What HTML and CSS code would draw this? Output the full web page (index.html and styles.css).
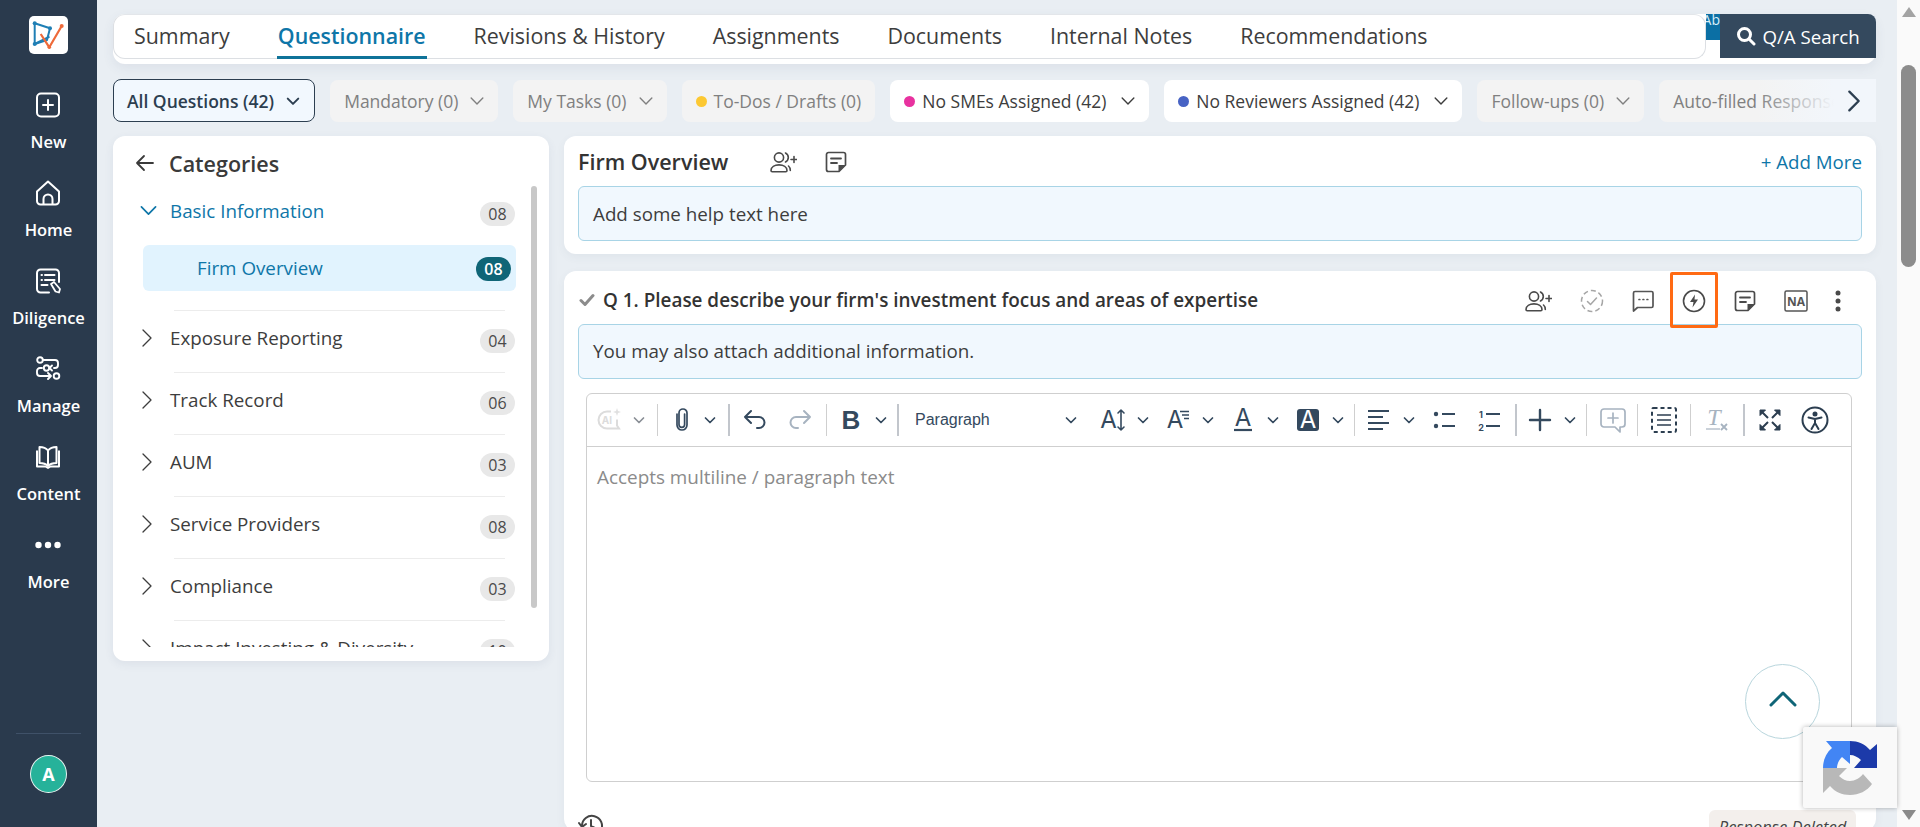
FILE: index.html
```html
<!DOCTYPE html>
<html lang="en">
  <head>
    <meta charset="UTF-8" />
    <meta name="viewport" content="width=device-width, initial-scale=1.0" />
    <title>Questionnaire</title>
    <link rel="stylesheet" href="styles.css">
  </head>
  <body>
    <svg class="defs" width="0" height="0">
      <symbol id="chev" viewBox="0 0 12 12"><path d="M1.5 4l4.5 4.5L10.5 4" fill="none" stroke="currentColor" stroke-width="1.7" stroke-linecap="round" stroke-linejoin="round"/></symbol>
      <symbol id="chev-thin" viewBox="0 0 12 12"><path d="M1 3.5l5 5 5-5" fill="none" stroke="currentColor" stroke-width="1.2" stroke-linecap="round" stroke-linejoin="round"/></symbol>
      <symbol id="chev-right" viewBox="0 0 12 20"><path d="M2 2l8 8-8 8" fill="none" stroke="currentColor" stroke-width="1.3" stroke-linecap="round" stroke-linejoin="round"/></symbol>
      <symbol id="person-add" viewBox="0 0 28 24"><g fill="none" stroke="currentColor" stroke-width="1.6" stroke-linecap="round"><circle cx="10" cy="7.5" r="4.6"/><path d="M2 20.5c0-3.6 3.6-5.6 8-5.6s8 2 8 5.600c0 .8-.4 1.200-1.200 1.200H3.200C2.400 21.700 2 21.300 2 20.500z"/><path d="M16.500 3c1.800 1 2.800 2.600 2.800 4.500s-1 3.500-2.800 4.500M19.500 16c1.200 1 1.800 2.500 1.800 4.500"/><path d="M25 6.500v6M22 9.500h6"/></g></symbol>
      <symbol id="note" viewBox="0 0 24 24"><path d="M4.500 2.500h15a2 2 0 0 1 2 2v10.500l-6.500 6.500H4.500a2 2 0 0 1-2-2v-15a2 2 0 0 1 2-2z" fill="none" stroke="currentColor" stroke-width="1.700"/><path d="M14.500 21.500v-6.500h7z" fill="currentColor"/><path d="M7 8.500h10M7 13h6" stroke="currentColor" stroke-width="1.800" stroke-linecap="round"/></symbol>
    </svg>

    <aside class="sidebar">
      <div class="logo">
        <svg width="39" height="38" viewBox="0 0 39 38" fill="none">
          <path d="M5.700 7.300L21 12.300 18 24 5.700 28z" stroke="#1f7fb5" stroke-width="2" stroke-linejoin="round"/>
          <path d="M5.700 28L20.500 20.700" stroke="#1f7fb5" stroke-width="2"/>
          <path d="M11.700 18l8.600 13.300L32.700 10" stroke="#ee6a3a" stroke-width="2.200" stroke-linejoin="round"/>
          <circle cx="5.700" cy="7.300" r="2" fill="#1f7fb5"/>
          <circle cx="21" cy="12.300" r="2" fill="#1f7fb5"/>
          <circle cx="5.700" cy="28" r="2" fill="#1f7fb5"/>
          <circle cx="32.700" cy="10" r="2" fill="#ee6a3a"/>
          <circle cx="20.300" cy="31.300" r="1.800" fill="#ee6a3a"/>
        </svg>
      </div>
      <nav class="nav">
        <a class="nav-item">
          <svg width="26" height="26" viewBox="0 0 26 26" fill="none" stroke="#fff" stroke-width="2"><rect x="2" y="1.500" width="22" height="23" rx="4"/><path d="M13 8v10M8 13h10" stroke-linecap="round"/></svg>
          <span>New</span>
        </a>
        <a class="nav-item">
          <svg width="26" height="26" viewBox="0 0 26 26" fill="none" stroke="#fff" stroke-width="2" stroke-linejoin="round"><path d="M2 11.500L13 1.500l11 10v9.500a3.500 3.500 0 0 1-3.500 3.500h-15A3.500 3.500 0 0 1 2 21z"/><path d="M8.500 24.500V19a4.500 4.500 0 0 1 9 0v5.500"/></svg>
          <span>Home</span>
        </a>
        <a class="nav-item">
          <svg width="26" height="26" viewBox="0 0 26 26" fill="none" stroke="#fff" stroke-width="2" stroke-linecap="round"><path d="M24 14V5a3.500 3.500 0 0 0-3.500-3.500h-15A3.500 3.500 0 0 0 2 5v16a3.500 3.500 0 0 0 3.500 3.500H14"/><path d="M6.500 7h.5M10 7h9.500M6.500 12h.5M10 12h9.500M6.500 17h6"/><path d="M16 16l3-2 6 7-1 3.500-3.500-1z" stroke-width="1.800" stroke-linejoin="round"/></svg>
          <span>Diligence</span>
        </a>
        <a class="nav-item">
          <svg width="26" height="26" viewBox="0 0 26 26" fill="none" stroke="#fff" stroke-width="1.900" stroke-linecap="round" stroke-linejoin="round"><circle cx="5" cy="4" r="2.800"/><path d="M8 4h12a3 3 0 0 1 3 3v2a3 3 0 0 1-3 3h-1"/><path d="M17 9.500L14.500 12l2.500 2.500"/><path d="M7 12H5a3 3 0 0 0-3 3v2a3 3 0 0 0 3 3h11M13 17l3 3-3 3"/><circle cx="11.500" cy="12" r="2.700"/><circle cx="21.500" cy="20" r="2.800"/></svg>
          <span>Manage</span>
        </a>
        <a class="nav-item">
          <svg width="26" height="26" viewBox="0 0 26 26" fill="none" stroke="#fff" stroke-width="2" stroke-linejoin="round"><path d="M13 6.500C11 4 8 3 4.500 3v16c3.500 0 6.500 1 8.500 3 2-2 5-3 8.500-3V3C18 3 15 4 13 6.500zM13 6.500V22"/><path d="M2 6.500v16h8.500l2.500 1.500 2.500-1.500H24v-16"/></svg>
          <span>Content</span>
        </a>
        <a class="nav-item">
          <svg width="26" height="26" viewBox="0 0 26 26" fill="#fff"><circle cx="3.500" cy="13" r="3.200"/><circle cx="13" cy="13" r="3.200"/><circle cx="22.500" cy="13" r="3.200"/></svg>
          <span>More</span>
        </a>
      </nav>
      <div class="side-foot">
        <div class="avatar">A</div>
      </div>
    </aside>

    <main class="main">
      <div class="tabbar">
        <div class="tabs">
          <a class="tab">Summary</a>
          <a class="tab active">Questionnaire</a>
          <a class="tab">Revisions &amp; History</a>
          <a class="tab">Assignments</a>
          <a class="tab">Documents</a>
          <a class="tab">Internal Notes</a>
          <a class="tab">Recommendations</a>
        </div>
        <div class="tab-peek">Ab</div>
        <button class="qa-search">
          <svg width="20" height="20" viewBox="0 0 20 20" fill="none" stroke="#fff" stroke-width="3" stroke-linecap="round"><circle cx="8.500" cy="8.500" r="6"/><path d="M13 13l5 5"/></svg>
          Q/A Search
        </button>
      </div>

      <div class="filters">
        <div class="pill selected">All Questions (42) <svg class="pill-chev"><use href="#chev"/></svg></div>
        <div class="pill muted">Mandatory (0) <svg class="pill-chev"><use href="#chev-thin"/></svg></div>
        <div class="pill muted">My Tasks (0) <svg class="pill-chev"><use href="#chev-thin"/></svg></div>
        <div class="pill muted"><i class="dot yellow"></i>To-Dos / Drafts (0)</div>
        <div class="pill assign"><i class="dot pink"></i>No SMEs Assigned (42) <svg class="pill-chev"><use href="#chev-thin"/></svg></div>
        <div class="pill assign"><i class="dot blue"></i>No Reviewers Assigned (42) <svg class="pill-chev"><use href="#chev-thin"/></svg></div>
        <div class="pill muted">Follow-ups (0) <svg class="pill-chev"><use href="#chev-thin"/></svg></div>
        <div class="pill muted">Auto-filled Responses (0)</div>
        <div class="filters-more">
          <svg width="14" height="24" viewBox="0 0 12 20"><path d="M2 2l8 8-8 8" fill="none" stroke="#2c3e50" stroke-width="2" stroke-linecap="round" stroke-linejoin="round"/></svg>
        </div>
      </div>

      <div class="columns">
        <section class="categories">
          <div class="cat-head">
            <svg width="20" height="18" viewBox="0 0 20 18" fill="none" stroke="#3a3a3a" stroke-width="1.800" stroke-linecap="round" stroke-linejoin="round"><path d="M18 9H2M9 2L2 9l7 7"/></svg>
            <h2>Categories</h2>
          </div>
          <div class="cat-list">
            <div class="cat-row open">
              <svg class="cat-chev down"><use href="#chev-thin"/></svg>
              <span class="cat-name">Basic Information</span>
              <span class="count">08</span>
            </div>
            <div class="cat-sub">
              <span class="cat-name">Firm Overview</span>
              <span class="count dark">08</span>
            </div>
            <hr class="cat-sep first" />
            <div class="cat-row">
              <svg class="cat-chev"><use href="#chev-right"/></svg>
              <span class="cat-name">Exposure Reporting</span>
              <span class="count">04</span>
            </div>
            <hr class="cat-sep" />
            <div class="cat-row">
              <svg class="cat-chev"><use href="#chev-right"/></svg>
              <span class="cat-name">Track Record</span>
              <span class="count">06</span>
            </div>
            <hr class="cat-sep" />
            <div class="cat-row">
              <svg class="cat-chev"><use href="#chev-right"/></svg>
              <span class="cat-name">AUM</span>
              <span class="count">03</span>
            </div>
            <hr class="cat-sep" />
            <div class="cat-row">
              <svg class="cat-chev"><use href="#chev-right"/></svg>
              <span class="cat-name">Service Providers</span>
              <span class="count">08</span>
            </div>
            <hr class="cat-sep" />
            <div class="cat-row">
              <svg class="cat-chev"><use href="#chev-right"/></svg>
              <span class="cat-name">Compliance</span>
              <span class="count">03</span>
            </div>
            <hr class="cat-sep" />
            <div class="cat-row">
              <svg class="cat-chev"><use href="#chev-right"/></svg>
              <span class="cat-name">Impact Investing &amp; Diversity</span>
              <span class="count">10</span>
            </div>
          </div>
          <div class="cat-thumb"></div>
        </section>

        <div class="content">
          <section class="card overview">
            <div class="overview-head">
              <h2>Firm Overview</h2>
              <svg class="head-icon person"><use href="#person-add"/></svg>
              <svg class="head-icon"><use href="#note"/></svg>
              <a class="add-more">+ Add More</a>
            </div>
            <div class="help-box">Add some help text here</div>
          </section>

          <section class="card question">
            <div class="q-head">
              <svg class="q-check" width="16" height="14" viewBox="0 0 16 14" fill="none" stroke="#8c8c8c" stroke-width="3" stroke-linecap="round" stroke-linejoin="round"><path d="M2 7.500L6 11.500 14 2.500"/></svg>
              <h3>Q 1. Please describe your firm's investment focus and areas of expertise</h3>
              <div class="q-actions">
                <span class="q-action shift"><svg width="28" height="24"><use href="#person-add"/></svg></span>
                <span class="q-action">
                  <svg width="24" height="24" viewBox="0 0 24 24" fill="none" stroke="#a6a6a6" stroke-width="1.500"><circle cx="12" cy="12" r="10.500" stroke-dasharray="5 3"/><path d="M7.500 12.500l3 3 6-6.500" stroke-linecap="round" stroke-linejoin="round"/></svg>
                </span>
                <span class="q-action">
                  <svg width="24" height="24" viewBox="0 0 24 24" fill="none" stroke="#555" stroke-width="1.700" stroke-linejoin="round"><path d="M4 2.500h16.500a1.500 1.500 0 0 1 1.500 1.500v13a1.500 1.500 0 0 1-1.500 1.500H6.500L2.500 22V4A1.500 1.500 0 0 1 4 2.500z"/><path d="M8 10.500h.8M12 10.500h.8M16 10.500h.8" stroke-linecap="round"/></svg>
                </span>
                <span class="q-action">
                  <svg width="24" height="24" viewBox="0 0 24 24"><circle cx="12" cy="12" r="10.500" fill="none" stroke="#4a4a4a" stroke-width="1.600"/><path d="M13 5.500l-5 7.500h3.500L10.500 18.500l5.500-8h-3.500z" fill="#4a4a4a"/></svg>
                  <i class="highlight"></i>
                </span>
                <span class="q-action"><svg width="24" height="24"><use href="#note"/></svg></span>
                <span class="q-action">
                  <svg width="24" height="24" viewBox="0 0 24 24"><rect x="1" y="2" width="22" height="20" rx="1.500" fill="none" stroke="#555" stroke-width="1.500"/><text x="12" y="16.500" text-anchor="middle" class="na-text">NA</text></svg>
                </span>
                <span class="q-action kebab">
                  <svg width="8" height="24" viewBox="0 0 8 24" fill="#4a4a4a"><circle cx="4" cy="4" r="2.500"/><circle cx="4" cy="12" r="2.500"/><circle cx="4" cy="20" r="2.500"/></svg>
                </span>
              </div>
            </div>
            <div class="help-box q-help">You may also attach additional information.</div>

            <div class="editor">
              <div class="toolbar">
                <span class="tool faded">
                  <svg width="26" height="26" viewBox="0 0 26 26" fill="none" stroke="#dcdcdc" stroke-width="2"><path d="M15 4.500H11a8.500 8.500 0 0 0 0 17h12l-2-3v-6"/><text x="11" y="17" text-anchor="middle" class="ai-text">AI</text><path d="M21 1l1 3 3 1-3 1-1 3-1-3-3-1 3-1z" fill="#e0e0e0" stroke="none"/></svg>
                </span>
                <svg class="tb-chev grey"><use href="#chev"/></svg>
                <i class="sep"></i>
                <span class="tool">
                  <svg width="24" height="26" viewBox="0 0 24 26" fill="none" stroke="#34495e" stroke-width="1.700" stroke-linecap="round"><path d="M7 7v11a5 5 0 0 0 10 0V6a4 4 0 0 0-8 0v11.500a2.800 2.800 0 0 0 5.600 0V7"/></svg>
                </span>
                <svg class="tb-chev s10"><use href="#chev"/></svg>
                <i class="sep dark"></i>
                <span class="tool s14">
                  <svg width="24" height="24" viewBox="0 0 24 24" fill="none" stroke="#34495e" stroke-width="2" stroke-linecap="round" stroke-linejoin="round"><path d="M8 3L2 9l6 6M2 9h14a5.500 5.500 0 0 1 5.500 5.500v0a5.500 5.500 0 0 1-5.500 5.500h-2"/></svg>
                </span>
                <span class="tool s21">
                  <svg width="24" height="24" viewBox="0 0 24 24" fill="none" stroke="#a7b3c0" stroke-width="2" stroke-linecap="round" stroke-linejoin="round"><path d="M16 3l6 6-6 6M22 9H8a5.500 5.500 0 0 0-5.500 5.500v0A5.500 5.500 0 0 0 8 20h2"/></svg>
                </span>
                <i class="sep s14"></i>
                <span class="tool tool-b">B</span>
                <svg class="tb-chev"><use href="#chev"/></svg>
                <i class="sep dark s10"></i>
                <div class="para s17">Paragraph <svg class="tb-chev"><use href="#chev"/></svg></div>
                <span class="tool s24">
                  <svg width="26" height="24" viewBox="0 0 26 24"><text x="8.500" y="20" text-anchor="middle" class="a-text">A</text><path d="M21 2v20M18 5l3-3 3 3M18 19l3 3 3-3" fill="none" stroke="#34495e" stroke-width="1.600" stroke-linecap="round" stroke-linejoin="round"/></svg>
                </span>
                <svg class="tb-chev"><use href="#chev"/></svg>
                <span class="tool s17">
                  <svg width="24" height="24" viewBox="0 0 24 24"><text x="9" y="20" text-anchor="middle" class="a-text">A</text><path d="M14 3.500h9M16 7h7M18 10.500h5" stroke="#34495e" stroke-width="1.500"/></svg>
                </span>
                <svg class="tb-chev"><use href="#chev"/></svg>
                <span class="tool s17">
                  <svg width="24" height="24" viewBox="0 0 24 24"><text x="12" y="18" text-anchor="middle" class="a-text">A</text><path d="M3 22h18" stroke="#34495e" stroke-width="2.200"/></svg>
                </span>
                <svg class="tb-chev"><use href="#chev"/></svg>
                <span class="tool s17">
                  <svg width="24" height="24" viewBox="0 0 24 24"><rect x="1" y="1" width="22" height="22" rx="3" fill="#34495e"/><text x="12" y="20" text-anchor="middle" class="a-text light">A</text></svg>
                </span>
                <svg class="tb-chev"><use href="#chev"/></svg>
                <i class="sep s10"></i>
                <span class="tool">
                  <svg width="24" height="24" viewBox="0 0 24 24" stroke="#34495e" stroke-width="2"><path d="M1 3h21M1 9h15M1 15h21M1 21h15"/></svg>
                </span>
                <svg class="tb-chev"><use href="#chev"/></svg>
                <span class="tool s17">
                  <svg width="24" height="24" viewBox="0 0 24 24" fill="#34495e"><circle cx="4" cy="6" r="2.200"/><circle cx="4" cy="18" r="2.200"/><path d="M10 6h13M10 18h13" stroke="#34495e" stroke-width="2"/></svg>
                </span>
                <span class="tool s21">
                  <svg width="24" height="24" viewBox="0 0 24 24"><text x="4" y="10" text-anchor="middle" class="num-text">1</text><text x="4" y="23" text-anchor="middle" class="num-text">2</text><path d="M9 6h14M9 18h14" stroke="#34495e" stroke-width="2"/></svg>
                </span>
                <i class="sep dark s14"></i>
                <span class="tool">
                  <svg width="24" height="24" viewBox="0 0 24 24" stroke="#34495e" stroke-width="2.400" stroke-linecap="round"><path d="M12 2v20M2 12h20"/></svg>
                </span>
                <svg class="tb-chev"><use href="#chev"/></svg>
                <i class="sep s10"></i>
                <span class="tool s14">
                  <svg width="26" height="26" viewBox="0 0 26 26" fill="none" stroke="#a7b3c0" stroke-width="1.700" stroke-linejoin="round" stroke-linecap="round"><path d="M4 2h18a3 3 0 0 1 3 3v12a3 3 0 0 1-3 3h-2v5l-5-5H4a3 3 0 0 1-3-3V5a3 3 0 0 1 3-3z"/><path d="M13 6v10M8 11h10"/></svg>
                </span>
                <i class="sep"></i>
                <span class="tool s14">
                  <svg width="26" height="26" viewBox="0 0 26 26" fill="none" stroke="#2c3e50"><rect x="1" y="1" width="24" height="24" rx="1.500" stroke-width="2" stroke-dasharray="4 3"/><path d="M6 8h14M6 13h14M6 18h14" stroke-width="1.600"/></svg>
                </span>
                <i class="sep s14"></i>
                <span class="tool s14">
                  <svg width="24" height="24" viewBox="0 0 24 24"><text x="9" y="17" text-anchor="middle" class="tx-t">T</text><path d="M1 21h14" stroke="#a7b3c0" stroke-width="1.200"/><path d="M16 16l6 6M22 16l-6 6" stroke="#a7b3c0" stroke-width="1.800"/></svg>
                </span>
                <i class="sep dark s14"></i>
                <span class="tool s14">
                  <svg width="24" height="24" viewBox="0 0 24 24" fill="#2c3e50" stroke="#2c3e50" stroke-width="2"><path d="M2 2h5.500L2 7.500zM22 2h-5.500L22 7.500zM2 22h5.500L2 16.500zM22 22h-5.500L22 16.500z" stroke-width="1" /><path d="M4 4l6 6M20 4l-6 6M4 20l6-6M20 20l-6-6"/></svg>
                </span>
                <span class="tool s21">
                  <svg width="28" height="28" viewBox="0 0 28 28" fill="none" stroke="#2c3e50" stroke-width="2" stroke-linecap="round" stroke-linejoin="round"><circle cx="14" cy="14" r="12.500"/><circle cx="14" cy="8" r="1.500" fill="#2c3e50"/><path d="M7.500 11.500L14 13l6.500-1.500M14 13v4M14 17l-3.500 6M14 17l3.500 6"/></svg>
                </span>
              </div>
              <div class="editor-body">Accepts multiline / paragraph text</div>
            </div>

            <div class="q-foot">
              <svg width="26" height="26" viewBox="0 0 26 26" fill="none" stroke="#444" stroke-width="2" stroke-linecap="round" stroke-linejoin="round"><path d="M4 13a10 10 0 1 1 3 7M1 10l3 4 4-3M13 7v6l4 2"/></svg>
              <span class="tag">Response Deleted</span>
            </div>
          </section>
        </div>
      </div>
    </main>

    <div class="scrollbar">
      <i class="arrow-up"></i>
      <div class="scroll-thumb"></div>
      <i class="arrow-down"></i>
    </div>

    <button class="to-top">
      <svg width="28" height="16" viewBox="0 0 28 16" fill="none" stroke="#0f6577" stroke-width="3" stroke-linecap="round" stroke-linejoin="round"><path d="M2 14L14 2l12 12"/></svg>
    </button>

    <div class="recaptcha">
      <svg width="56" height="56" viewBox="0 0 56 56">
        <path d="M28 1C36 1 43 4 48 10L55 4V28H32L39 20C36 17 32 15 28 15Z" fill="#1c3aa9"/>
        <path d="M1 28C1 20 4 13 10 8L4 1H28V24L20 17C17 20 15 24 15 28Z" fill="#4285f4"/>
        <path d="M1 28H25L17 36C20 39 24 41 28 41C33 41 38 38 41 34L50 44C45 51 37 55 28 55C20 55 13 52 8 46L1 53Z" fill="#b8b8b8"/>
      </svg>
    </div>
  </body>
</html>
```

FILE: styles.css
```css
* {
  margin: 0;
  padding: 0;
  box-sizing: border-box;
  font-family: "Open Sans", sans-serif;
}

html,
body {
  height: 827px;
  overflow: hidden;
}

body {
  display: flex;
  background: #e9eef3;
  color: #3a3a3a;
}

.defs {
  position: absolute;
}

/* sidebar */
.sidebar {
  width: 97px;
  flex-shrink: 0;
  background: #2a3a4d;
  display: flex;
  flex-direction: column;
  align-items: center;
  padding: 16px 0 34px;
}

.logo {
  width: 39px;
  height: 38px;
  background: #fff;
  border-radius: 5px;
  display: flex;
  align-items: center;
  justify-content: center;
}

.nav {
  margin-top: 38px;
  display: flex;
  flex-direction: column;
  gap: 26px;
}

.nav-item {
  display: flex;
  flex-direction: column;
  align-items: center;
  gap: 12px;
  color: #fff;
  font-size: 16.5px;
  font-weight: 600;
  line-height: 24px;
}

.side-foot {
  margin-top: auto;
  width: 65px;
  border-top: 1px solid #3f5168;
  padding-top: 21px;
  display: flex;
  justify-content: center;
}

.avatar {
  width: 37px;
  height: 38px;
  border-radius: 50%;
  background: #26b29a;
  border: 1px solid #e6f5f2;
  color: #fff;
  font-size: 18px;
  font-weight: 700;
  display: flex;
  align-items: center;
  justify-content: center;
}

/* main column */
.main {
  flex: 1;
  min-width: 0;
  padding: 14px 21px 0 16px;
}

.tabbar {
  height: 50px;
  background: #fff;
  border-radius: 12px;
  display: flex;
  align-items: flex-start;
  box-shadow: 0 4px 12px rgba(60, 80, 110, 0.08);
}

.tabs {
  flex: 1;
  height: 45px;
  display: flex;
  gap: 46px;
  padding-left: 19px;
  border: 1px solid #dcdfe3;
  border-top-color: #e3e6ea;
  border-radius: 12px;
  background: #fff;
}

.tab {
  height: 44px;
  padding: 0 1px;
  font-size: 21.4px;
  line-height: 30px;
  padding-top: 6px;
  color: #3d3d3d;
}

.tab.active {
  color: #0e76a8;
  font-weight: 600;
  border-bottom: 3px solid #0f7399;
}

.tab-peek {
  width: 14px;
  height: 26px;
  background: #0b6fa4;
  color: #d8eef9;
  font-size: 14px;
  line-height: 12px;
  display: flex;
  justify-content: flex-end;
  overflow: hidden;
}

.qa-search {
  width: 156px;
  height: 44px;
  background: #34495e;
  color: #fff;
  border: none;
  border-radius: 0 8px 0 0;
  font-size: 18.700px;
  display: flex;
  align-items: center;
  justify-content: center;
  gap: 6px;
}

.filters {
  position: relative;
  margin-top: 15px;
  height: 43px;
  display: flex;
  gap: 15px;
  overflow: hidden;
}

.pill {
  flex-shrink: 0;
  height: 42px;
  margin-top: 1px;
  padding: 0 14px;
  display: flex;
  align-items: center;
  background: #fff;
  border-radius: 8px;
  font-size: 17.500px;
  white-space: nowrap;
  color: #3d3d3d;
}

.pill.selected {
  height: 43px;
  margin-top: 0;
  padding: 0 14px 0 13px;
  background: #f2f8fe;
  border: 1px solid #2c3e50;
  color: #2c3e50;
  font-weight: 600;
}

.pill.muted {
  background: #f3f3f3;
  color: #808080;
}

.pill-chev {
  width: 14px;
  height: 14px;
  margin-left: 12px;
}

.assign .pill-chev {
  margin-left: 15px;
}

.dot {
  width: 11px;
  height: 11px;
  border-radius: 50%;
  margin-right: 7px;
}

.dot.yellow {
  background: #fcc832;
}

.dot.pink {
  background: #e8329f;
}

.dot.blue {
  background: #4763c4;
}

.filters-more {
  position: absolute;
  right: 0;
  top: 0;
  bottom: 0;
  width: 120px;
  display: flex;
  align-items: center;
  justify-content: flex-end;
  padding-right: 15px;
  background: linear-gradient(to right, rgba(242, 246, 251, 0), #f2f6fb 65%);
}

.columns {
  margin-top: 14px;
  display: flex;
  align-items: flex-start;
  gap: 15px;
}

/* categories */
.categories {
  position: relative;
  width: 436px;
  height: 525px;
  flex-shrink: 0;
  background: #fff;
  border-radius: 12px;
  padding-bottom: 14px;
  box-shadow: 0 3px 10px rgba(60, 80, 110, 0.08);
}

.cat-head {
  height: 40px;
  padding: 14px 0 0 22px;
  display: flex;
  align-items: center;
  gap: 14px;
}

.cat-head h2 {
  font-size: 21.500px;
  font-weight: 600;
}

.cat-list {
  height: 471px;
  overflow: hidden;
  padding: 7px 34px 0 0;
}

.cat-row {
  height: 61px;
  padding: 0 0 8px 28px;
  display: flex;
  align-items: center;
  font-size: 18.800px;
  color: #3d3d3d;
}

.cat-chev {
  width: 12px;
  height: 20px;
  margin-right: 17px;
  flex-shrink: 0;
}

.cat-chev.down {
  color: #0e76a8;
  width: 17px;
  height: 17px;
  margin: 0 13px 0 -1px;
}

.cat-row.open {
  padding-bottom: 6px;
}

.open .cat-name {
  color: #0e76a8;
}

.cat-name {
  flex: 1;
  white-space: nowrap;
}

.count {
  width: 35px;
  height: 24px;
  margin-top: 6px;
  border-radius: 12px;
  background: #e8e8e8;
  font-size: 16px;
  display: flex;
  align-items: center;
  justify-content: center;
  color: #4a4a4a;
}

.cat-sub {
  height: 46px;
  margin: 1px -1px 0 30px;
  padding: 0 5px 0 54px;
  background: #e1f3fe;
  border-radius: 6px;
  display: flex;
  align-items: center;
  font-size: 18.800px;
  color: #0e76a8;
}

.count.dark {
  margin-top: 1px;
  background: #0f6577;
  color: #fff;
  font-weight: 600;
}

.cat-sep {
  border: none;
  border-top: 1px solid #ececec;
  margin-left: 61px;
  width: 331px;
}

.cat-sep.first {
  margin-top: 19px;
}

.cat-thumb {
  position: absolute;
  left: 418px;
  top: 50px;
  width: 6px;
  height: 422px;
  border-radius: 3px;
  background: #c8c8c8;
}

/* right side */
.content {
  flex: 1;
  min-width: 0;
  display: flex;
  flex-direction: column;
  gap: 17px;
}

.card {
  background: #fff;
  border-radius: 12px;
  box-shadow: 0 3px 10px rgba(60, 80, 110, 0.06);
}

.overview {
  height: 118px;
  padding: 0 14px;
}

.overview-head {
  height: 50px;
  display: flex;
  align-items: center;
  color: #3d3d3d;
}

.overview-head h2 {
  font-size: 21.500px;
  font-weight: 600;
  color: #333;
  width: 192px;
}

.head-icon {
  width: 28px;
  height: 24px;
  margin: 2px 25px 0 0;
  color: #4a4a4a;
}

.head-icon.person {
  margin-left: -1px;
}

.add-more {
  margin-left: auto;
  font-size: 18.700px;
  color: #0e76a8;
}

.help-box {
  height: 55px;
  padding-left: 14px;
  display: flex;
  align-items: center;
  background: #f1f8fe;
  border: 1px solid #a8d4e6;
  border-radius: 6px;
  font-size: 18.800px;
  color: #3d3d3d;
}

.question {
  height: 560px;
}

.q-head {
  height: 53px;
  padding: 4px 0 0 15px;
  display: flex;
  align-items: center;
  gap: 8px;
}

.q-head h3 {
  font-size: 18.900px;
  font-weight: 600;
  color: #333;
}

.q-actions {
  margin: 2px 0 0 auto;
  padding-right: 21px;
  display: flex;
  align-items: center;
  color: #4a4a4a;
}

.q-action {
  position: relative;
  width: 51px;
  height: 28px;
  display: flex;
  align-items: center;
  justify-content: center;
}

.q-action.shift {
  margin-right: 3px;
}

.q-action.kebab {
  width: 34px;
}

.highlight {
  position: absolute;
  left: 1.500px;
  top: -15px;
  width: 48px;
  height: 56px;
  border: 3px solid #ff6a13;
  border-radius: 2px;
}

.q-help {
  margin: 0 14px;
  padding-bottom: 2px;
}

.na-text {
  font-size: 12px;
  font-weight: 700;
  fill: #555;
}

/* editor */
.editor {
  margin: 14px 24px 0 22px;
  height: 389px;
  border: 1px solid #cfcfcf;
  border-radius: 6px;
}

.toolbar {
  height: 53px;
  border-bottom: 1px solid #cfcfcf;
  padding-left: 10px;
  display: flex;
  align-items: center;
  gap: 12px;
}

.tool {
  width: 24px;
  height: 28px;
  flex-shrink: 0;
  display: flex;
  align-items: center;
  justify-content: center;
}

.tool svg {
  flex-shrink: 0;
}

.tool-b {
  font-family: "Liberation Sans", sans-serif;
  font-size: 26px;
  font-weight: 700;
  color: #34495e;
}

.tb-chev {
  width: 12px;
  height: 12px;
  flex-shrink: 0;
  color: #34495e;
}

.tb-chev.grey {
  color: #8a8f96;
}

.sep {
  width: 1px;
  height: 32px;
  flex-shrink: 0;
  background: #cfcfcf;
}

.sep.dark {
  background: #c2c6cc;
  width: 2px;
  margin-right: -1px;
}

.s10 {
  margin-left: -2px;
}

.s14 {
  margin-left: 2px;
}

.s17 {
  margin-left: 5px;
}

.s21 {
  margin-left: 9px;
}

.s24 {
  margin-left: 12px;
}

.para {
  width: 162px;
  flex-shrink: 0;
  display: flex;
  align-items: center;
  justify-content: space-between;
  font-family: "Liberation Sans", sans-serif;
  font-size: 16px;
  color: #34495e;
}

.a-text {
  font-family: "Inter", sans-serif;
  font-size: 24px;
  font-weight: 400;
  fill: #34495e;
}

.a-text.light {
  fill: #fff;
}

.ai-text {
  font-family: "Inter", sans-serif;
  font-size: 10px;
  font-weight: 700;
  fill: #dcdcdc;
  stroke: none;
}

.num-text {
  font-family: "Inter", sans-serif;
  font-size: 9px;
  font-weight: 700;
  fill: #34495e;
}

.tx-t {
  font-family: "Liberation Serif", serif;
  font-style: italic;
  font-size: 24px;
  fill: #a7b3c0;
}

.editor-body {
  padding: 16px 0 0 10px;
  font-size: 18.900px;
  line-height: 28px;
  color: #8b8b8b;
}

.q-foot {
  margin: 28px 20px 0 14px;
  height: 40px;
  display: flex;
  align-items: flex-start;
  justify-content: space-between;
}

.q-foot svg {
  margin-top: 3px;
}

.tag {
  width: 147px;
  height: 32px;
  background: #f3efec;
  border-radius: 6px 6px 0 0;
  font-size: 16.500px;
  font-style: italic;
  color: #444;
  display: flex;
  align-items: center;
  justify-content: center;
}

/* page scrollbar */
.scrollbar {
  width: 23px;
  flex-shrink: 0;
  background: #fafafa;
  display: flex;
  flex-direction: column;
  align-items: center;
  padding-top: 7px;
}

.arrow-up,
.arrow-down {
  width: 0;
  height: 0;
  border-left: 7px solid transparent;
  border-right: 7px solid transparent;
}

.arrow-up {
  border-bottom: 10px solid #a3a3a3;
}

.arrow-down {
  margin-top: 543px;
  border-top: 10px solid #8a8a8a;
}

.scroll-thumb {
  width: 15px;
  height: 202px;
  margin-top: 48px;
  border-radius: 8px;
  background: #8c8c8c;
}

/* things floating over the page */
.to-top {
  position: absolute;
  left: 1745px;
  top: 664px;
  width: 75px;
  height: 75px;
  border-radius: 50%;
  background: #fff;
  border: 1px solid #b9d6dd;
  display: flex;
  align-items: center;
  justify-content: center;
  padding-bottom: 6px;
}

.recaptcha {
  position: absolute;
  left: 1803px;
  top: 727px;
  width: 94px;
  height: 81px;
  background: #f9f9f9;
  border-radius: 2px 0 0 2px;
  box-shadow: 0 0 5px rgba(0, 0, 0, 0.3);
  display: flex;
  align-items: center;
  padding-left: 19px;
}
```
